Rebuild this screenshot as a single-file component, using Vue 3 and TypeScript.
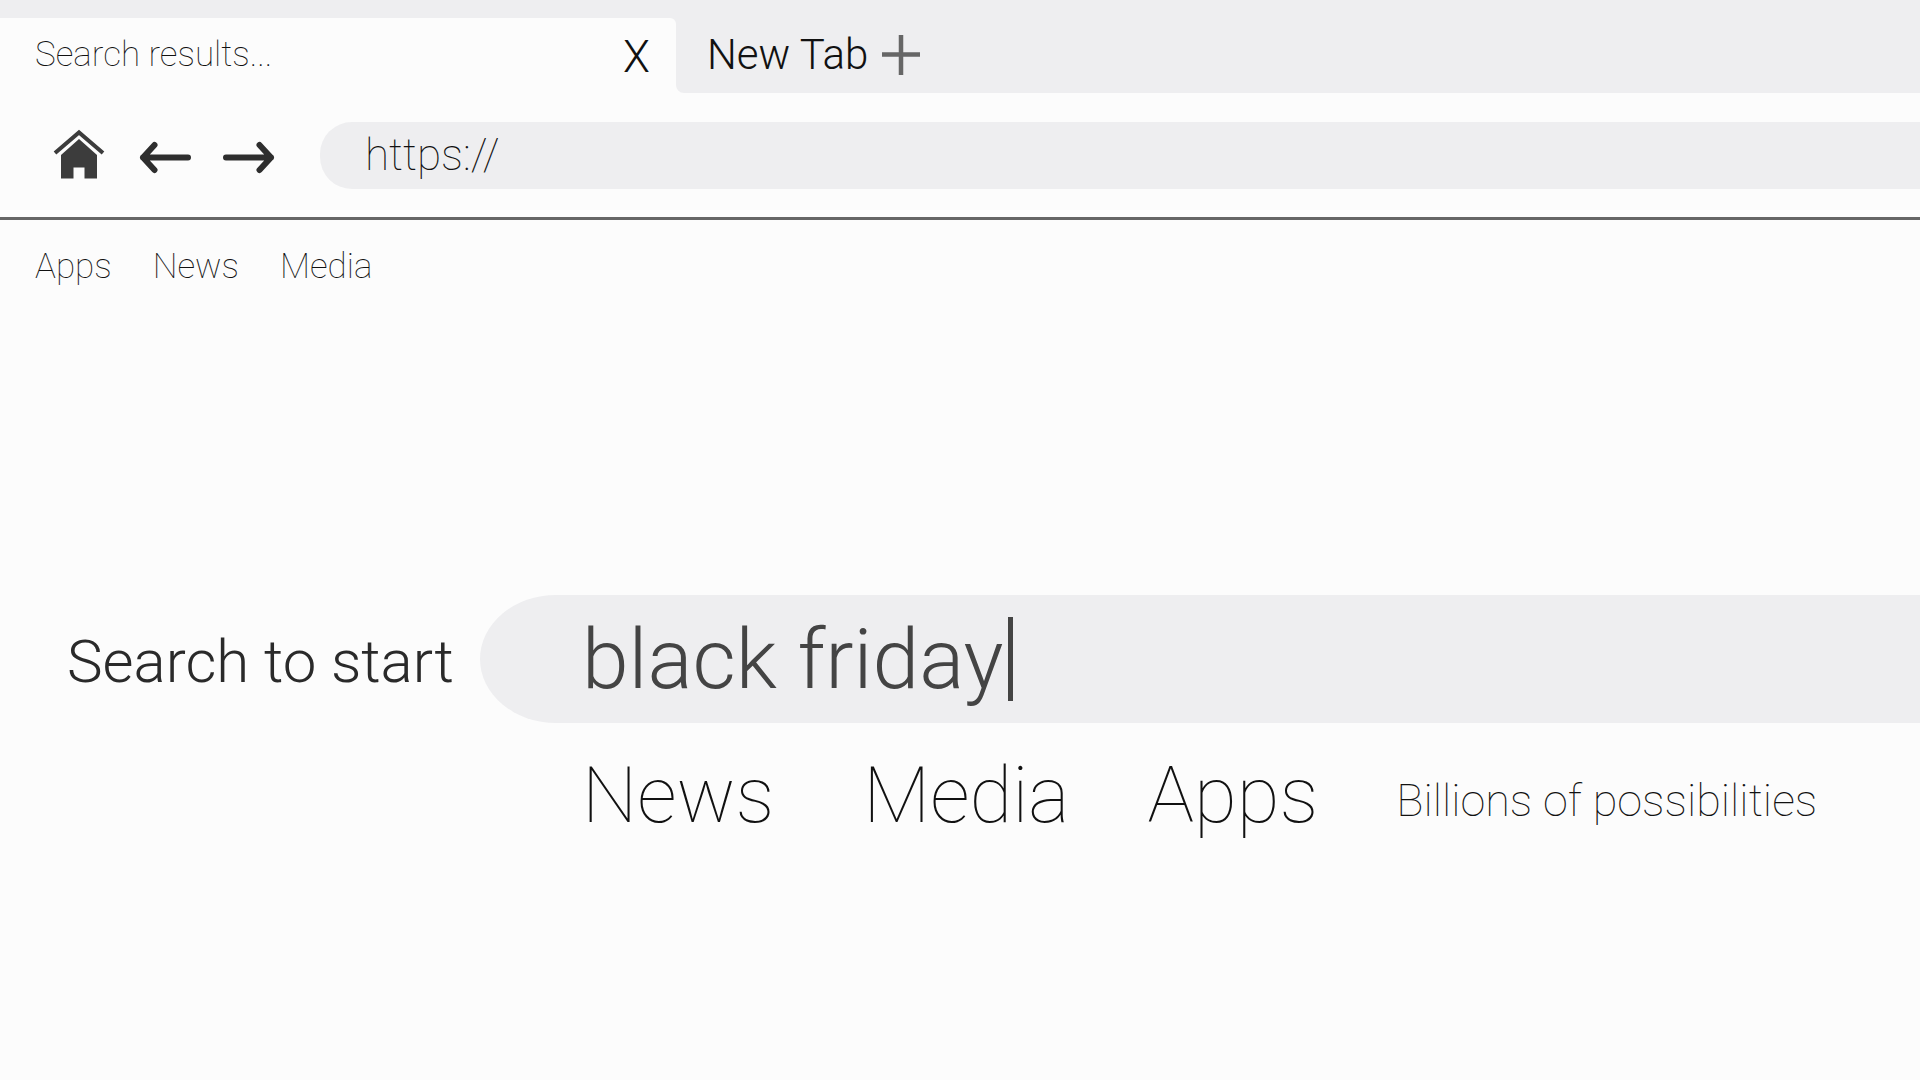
<script setup lang="ts">
import { ref } from 'vue'

const address = ref('https://')
const query = ref('black friday')
const bookmarks: string[] = ['Apps', 'News', 'Media']
const categories: string[] = ['News', 'Media', 'Apps']
</script>

<template>
  <div class="browser">
    <header class="tabs">
      <div class="tab">
        <span class="tab-title">Search results...</span>
        <button class="close" type="button" aria-label="Close tab">X</button>
      </div>
      <div class="strip">
        <button class="new-tab" type="button">
          <span>New Tab</span>
          <svg class="plus" viewBox="0 0 38 40" aria-hidden="true">
            <path d="M19 0V40M0 19.500H38" fill="none" stroke="#666" stroke-width="4.500" />
          </svg>
        </button>
      </div>
    </header>

    <div class="toolbar">
      <button class="icon" type="button" aria-label="Home">
        <svg class="home" viewBox="0 0 52 52" aria-hidden="true">
          <path class="roof" d="M2 24L26 3.500L50 24" />
          <path class="walls" d="M26 10L44 26V49.500H31.500V38.500H20.500V49.500H8V26Z" />
        </svg>
      </button>
      <button class="icon" type="button" aria-label="Back">
        <svg class="arrow" viewBox="0 0 52 52" aria-hidden="true">
          <path d="M49 28.500H4M15.500 16L4 28.500L15.500 41" />
        </svg>
      </button>
      <button class="icon" type="button" aria-label="Forward">
        <svg class="arrow" viewBox="0 0 52 52" aria-hidden="true">
          <path d="M3 28.500H48M36.500 16L48 28.500L36.500 41" />
        </svg>
      </button>
      <input v-model="address" class="address" type="text" aria-label="Address" spellcheck="false" />
    </div>

    <nav class="bookmarks">
      <a v-for="item in bookmarks" :key="item" href="#">{{ item }}</a>
    </nav>

    <main class="search">
      <label class="prompt" for="query">Search to start</label>
      <div class="field">
        <input id="query" v-model="query" class="query" type="text" spellcheck="false" />
        <span class="caret"></span>
      </div>
      <nav class="categories">
        <a v-for="item in categories" :key="item" href="#">{{ item }}</a>
        <span class="tagline">Billions of possibilities</span>
      </nav>
    </main>
  </div>
</template>

<style>
body {
  margin: 0;
  background: #fcfcfc;
}
</style>

<style scoped>
.browser {
  min-height: 100vh;
  overflow: hidden;
  background: #fcfcfc;
  color: #111;
  font-family: Roboto, "Liberation Sans", sans-serif;
  font-weight: 100;
}

button,
input {
  margin: 0;
  padding: 0;
  border: 0;
  outline: 0;
  background: none;
  color: inherit;
  font: inherit;
}

a {
  color: inherit;
  text-decoration: none;
}

svg {
  display: block;
}

.tabs {
  display: flex;
  padding-top: 18px;
  background: linear-gradient(#eeeef0 50%, #fcfcfc 50%);
}

.tab {
  display: flex;
  flex: 0 0 676px;
  align-items: center;
  justify-content: space-between;
  box-sizing: border-box;
  height: 75px;
  padding: 0 26px 2px 35px;
  border-top-right-radius: 6px;
  background: #fcfcfc;
}

.tab-title {
  font-size: 35px;
  line-height: 44px;
}

.close {
  padding-top: 4px;
  font-size: 44px;
  font-weight: 350;
  line-height: 48px;
}

.strip {
  display: flex;
  flex: 1;
  align-items: center;
  padding: 0 0 2px 31px;
  border-bottom-left-radius: 8px;
  background: #eeeef0;
}

.new-tab {
  display: flex;
  align-items: center;
  gap: 14px;
  font-size: 42px;
  font-weight: 300;
  line-height: 48px;
}

.plus {
  width: 38px;
  height: 40px;
}

.toolbar {
  display: flex;
  align-items: center;
  box-sizing: border-box;
  height: 127px;
  padding-left: 53px;
  border-bottom: 3px solid #666;
}

.icon {
  width: 52px;
  height: 52px;
  margin-right: 32px;
}

.icon:first-child {
  margin-right: 34px;
}

.arrow {
  fill: none;
  stroke: #2e2e2e;
  stroke-width: 6;
  stroke-linecap: round;
  stroke-linejoin: round;
}

.roof {
  fill: none;
  stroke: #3c3c3c;
  stroke-width: 4;
}

.walls {
  fill: #3c3c3c;
}

.address {
  flex: 1;
  box-sizing: border-box;
  min-width: 0;
  height: 67px;
  margin-left: 13px;
  padding-left: 45px;
  border-radius: 32px 0 0 32px;
  background: #eeeef0;
  font-size: 44px;
}

.bookmarks {
  display: flex;
  gap: 41px;
  padding: 25px 35px 0;
  font-size: 35px;
  line-height: 44px;
}

.search {
  display: grid;
  grid-template-columns: 480px 1fr;
  align-items: center;
  row-gap: 24px;
  margin-top: 306px;
}

.prompt {
  padding: 6px 0 0 67px;
  color: #2a2a2a;
  font-size: 60px;
  font-weight: 300;
  line-height: 72px;
  white-space: nowrap;
}

.field {
  display: flex;
  align-items: center;
  height: 128px;
  padding-left: 102px;
  border-radius: 76px 0 0 76px / 64px 0 0 64px;
  background: #eeeef0;
  color: #444;
}

.query {
  field-sizing: content;
  height: 112px;
  font-size: 84px;
  font-weight: 300;
}

.caret {
  width: 5px;
  height: 84px;
  margin-left: 4px;
  background: #444;
}

.categories {
  display: flex;
  grid-column: 2;
  align-items: center;
  gap: 78px;
  padding-left: 102px;
  font-size: 78px;
  line-height: 98px;
  white-space: nowrap;
}

.categories a:first-child {
  margin-right: 11px;
}

.tagline {
  padding-top: 10px;
  font-size: 45px;
  line-height: 52px;
}
</style>
